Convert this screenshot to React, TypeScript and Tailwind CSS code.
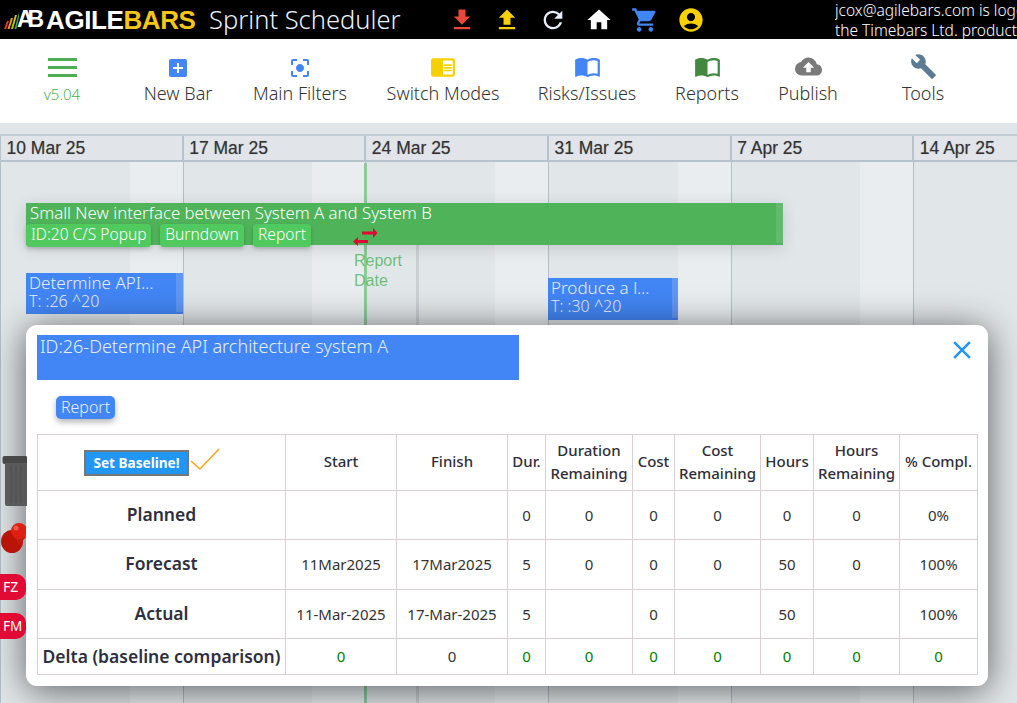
import { MdFileDownload, MdFileUpload, MdRefresh, MdHome, MdShoppingCart, MdAccountCircle, MdAddBox, MdCenterFocusStrong, MdChromeReaderMode, MdImportContacts, MdCloudUpload, MdBuild, MdClose } from 'react-icons/md';

const ui = { fontFamily: '"Noto Sans", sans-serif' };
const arial = { fontFamily: '"Liberation Sans", sans-serif' };

const weeks = ['10 Mar 25', '17 Mar 25', '24 Mar 25', '31 Mar 25', '7 Apr 25', '14 Apr 25'];

const tools = [
  { label: 'New Bar', width: 'w-[108px]', icon: <MdAddBox size={24} className="text-[#4285f4]" /> },
  { label: 'Main Filters', width: 'w-[136px]', icon: <MdCenterFocusStrong size={24} className="text-[#4285f4]" /> },
  { label: 'Switch Modes', width: 'w-[150px]', icon: <MdChromeReaderMode size={26} className="text-[#f7d000]" /> },
  { label: 'Risks/Issues', width: 'w-[138px]', icon: <MdImportContacts size={27} className="text-[#4285f4]" /> },
  { label: 'Reports', width: 'w-[102px]', icon: <MdImportContacts size={27} className="text-[#43883f]" /> },
  { label: 'Publish', width: 'w-[100px]', icon: <MdCloudUpload size={27} className="text-[#7a7a7a]" /> },
  { label: 'Tools', width: 'w-[130px]', icon: <MdBuild size={27} className="text-[#5b7a94]" /> },
];

const rows = [
  { label: 'Planned', h: 'h-[49px]', cells: ['', '', '0', '0', '0', '0', '0', '0', '0%'] },
  { label: 'Forecast', h: 'h-[50px]', cells: ['11Mar2025', '17Mar2025', '5', '0', '0', '0', '50', '0', '100%'] },
  { label: 'Actual', h: 'h-[49px]', cells: ['11-Mar-2025', '17-Mar-2025', '5', '', '0', '', '50', '', '100%'] },
];

const delta = ['0', '0', '0', '0', '0', '0', '0', '0', '0'];

const headers = [
  ['Start'],
  ['Finish'],
  ['Dur.'],
  ['Duration', 'Remaining'],
  ['Cost'],
  ['Cost', 'Remaining'],
  ['Hours'],
  ['Hours', 'Remaining'],
  ['% Compl.'],
];

const colWidths = ['w-[248px]', 'w-[111px]', 'w-[111px]', 'w-[38px]', 'w-[87px]', 'w-[42px]', 'w-[86px]', 'w-[53px]', 'w-[86px]', 'w-[78px]'];

function Logo() {
  return (
    <div className="flex items-center w-[197px] shrink-0 pl-1 h-full">
      <svg width="15" height="18" viewBox="0 0 15 18" className="shrink-0">
        <path d="M0 18 L3 10 L5 10 L2 18Z" fill="#e53935" />
        <path d="M3.5 18 L7 7 L9 7 L5.5 18Z" fill="#f39c12" />
        <path d="M7 18 L11 4 L13 4 L9 18Z" fill="#b9c41f" />
        <path d="M10.5 18 L15 1 L15 6 L12.5 18Z" fill="#43a047" />
      </svg>
      <span className="w-[29px] -ml-[2px] text-white font-bold text-[23px] tracking-[-6px] leading-none" style={arial}>AB</span>
      <span className="font-bold text-[26px] leading-none tracking-[-0.4px] whitespace-nowrap" style={arial}>
        <span className="text-white">AGILE</span>
        <span className="text-[#f5c518]">BARS</span>
      </span>
    </div>
  );
}

function Header() {
  return (
    <div className="h-[39px] bg-black flex items-center relative overflow-hidden">
      <Logo />
      <div className="ml-3 text-[25.5px] font-light text-[#eaf2ff] w-[230px] whitespace-nowrap">Sprint Scheduler</div>
      <div className="flex items-center gap-[18px] ml-[9px]">
        <MdFileDownload size={28} className="text-[#e8483a]" />
        <MdFileUpload size={28} className="text-[#f7d000] -ml-px" />
        <MdRefresh size={28} className="text-[#e6effa]" />
        <MdHome size={28} className="text-white" />
        <MdShoppingCart size={28} className="text-[#4285f4]" />
        <MdAccountCircle size={28} className="text-[#f7d000]" />
      </div>
      <div className="ml-auto w-[182px] shrink-0 text-[15.5px] leading-[20px] font-light text-white whitespace-nowrap overflow-hidden">
        <div>jcox@agilebars.com is logged in</div>
        <div>the Timebars Ltd. product</div>
      </div>
    </div>
  );
}

function Toolbar() {
  return (
    <div className="h-[84px] bg-white flex">
      <div className="w-[124px] flex flex-col items-center pt-[19px]">
        <div className="w-[29px] flex flex-col gap-[5px]">
          <div className="h-[3px] bg-[#4caf50]" />
          <div className="h-[3px] bg-[#4caf50]" />
          <div className="h-[3px] bg-[#4caf50]" />
        </div>
        <div className="text-[15px] font-light text-[#4caf50] mt-[6px]">v5.04</div>
      </div>
      {tools.map((t) => (
        <div key={t.label} className={`${t.width} flex flex-col items-center`}>
          <div className="h-[42px] flex items-end pb-[1px]">{t.icon}</div>
          <div className="text-[18px] font-light text-[#333] leading-[24px] whitespace-nowrap">{t.label}</div>
        </div>
      ))}
    </div>
  );
}

function Timeline() {
  return (
    <div className="relative flex-1 overflow-hidden mt-[11px] bg-[#e1e6e9] border-t-2 border-[#c3cdd3]">
      <div className="flex h-full -ml-px">
        {weeks.map((w) => (
          <div key={w} className="w-[182.67px] shrink-0 flex flex-col">
            <div className="h-[26px] shrink-0 border-l-2 border-b-2 border-[#b7c3ca] bg-[#e1e5e9] pl-[5.5px] text-[17.5px] leading-[25px] text-[#333] [text-shadow:0_0_1px_rgba(0,0,0,0.35)]" style={arial}>
              {w}
            </div>
            <div className="flex-1 ml-px border-l border-[#b3bfc7] flex justify-end">
              <div className="w-[53px] -mr-px bg-[#e9edf0]" />
            </div>
          </div>
        ))}
      </div>

      <div className="absolute left-[416px] top-[67px] bottom-0 w-[3px] bg-[#ccd0d4]" />
      <div className="absolute left-[364px] top-[27px] bottom-0 w-[2.5px] bg-[#8ecb99]" />

      <div className="absolute left-[26px] top-[67px] w-[757px] h-[42px] bg-[#4fb35a] text-white font-light shadow-[0_3px_16px_rgba(0,0,0,0.14)]">
        <div className="pl-1 -mt-px text-[16.8px] leading-[21px] whitespace-nowrap">Small New interface between System A and System B</div>
        <div className="flex gap-[9px] mt-px text-[15.6px] leading-[21px]">
          <div className="h-[23px] w-[125px] pl-[5px] bg-[#50c95f] rounded-[4px] shadow-[0_2px_4px_rgba(0,0,0,0.2)] whitespace-nowrap">ID:20 C/S Popup</div>
          <div className="h-[23px] w-[84px] text-center bg-[#50c95f] rounded-[4px] shadow-[0_2px_4px_rgba(0,0,0,0.2)]">Burndown</div>
          <div className="h-[23px] w-[58px] text-center bg-[#50c95f] rounded-[4px] shadow-[0_2px_4px_rgba(0,0,0,0.2)]">Report</div>
        </div>
        <div className="absolute right-0 top-0 bottom-[2px] w-[7px] bg-white/10" />
      </div>

      <svg className="absolute left-[352px] top-[92px]" width="27" height="20" viewBox="0 0 27 20" fill="#e00a35">
        <path d="M10 3.500 H21 V0 L25.500 5 L21 10 V6.500 H10Z" />
        <path d="M16 12 H6 V9 L1 13.500 L6 18 V15 H16Z" />
      </svg>

      <div className="absolute left-[354px] top-[115px] text-[16px] leading-[20px] text-[#4fb35a]/80" style={arial}>
        Report<br />Date
      </div>

      <div className="absolute left-[26px] top-[137px] w-[157px] h-[41px] bg-[#4285f4] text-[#e6efff] font-light">
        <div className="pl-[3px] text-[17px] leading-[19px] whitespace-nowrap">Determine API…</div>
        <div className="pl-[3px] text-[16px] leading-[19px]">T: :26 ^20</div>
        <div className="absolute right-0 top-0 bottom-[2px] w-[7px] bg-white/15" />
      </div>
      <div className="absolute left-[548px] top-[142px] w-[130px] h-[42px] bg-[#4285f4] text-[#e6efff] font-light">
        <div className="pl-[3px] text-[17px] leading-[19px] whitespace-nowrap">Produce a l…</div>
        <div className="pl-[3px] text-[16px] leading-[19px]">T: :30 ^20</div>
        <div className="absolute right-0 top-0 bottom-[2px] w-[6px] bg-white/15" />
      </div>

      <svg className="absolute z-10 left-[2px] top-[319px]" width="25" height="52" viewBox="0 0 25 52">
        <rect x="0.500" y="1" width="25" height="8" rx="2" fill="#484848" />
        <path d="M3 8 H25 V51 H5 Q3 51 3 49Z" fill="#5a5a5a" />
        <path d="M9 11 V48 M14 11 V48 M19 11 V48" stroke="#505050" strokeWidth="1" />
      </svg>
      <svg className="absolute z-10 left-0 top-[387px]" width="26" height="32" viewBox="0 0 26 32">
        <ellipse cx="12" cy="18.500" rx="11" ry="11.500" fill="#b81408" />
        <path d="M13 12 L20 6 L26 14 L19 22Z" fill="#c81a0a" />
        <circle cx="19" cy="8" r="8" fill="#dd2012" />
        <circle cx="16" cy="5" r="2.500" fill="#ea5a4c" />
      </svg>
      <div className="absolute z-10 left-0 top-[438px] w-[26px] h-[26px] rounded-r-[10px] bg-[#e00a35] text-white text-[14px] leading-[26px] pl-[3px]">FZ</div>
      <div className="absolute z-10 left-0 top-[477px] w-[26px] h-[26px] rounded-r-[10px] bg-[#e00a35] text-white text-[13.5px] leading-[26px] pl-[3px]">FM</div>
    </div>
  );
}

function BaselineModal() {
  return (
    <div className="absolute left-[26px] top-[325px] w-[962px] h-[361px] bg-white rounded-[11px] shadow-[0_4px_36px_rgba(0,0,0,0.6)] pt-[10px] pl-[11px]">
      <div className="w-[482px] h-[45px] bg-[#4285f4] text-[#e6efff] text-[18px] font-light pl-[3px] leading-[23px] whitespace-nowrap">ID:26-Determine API architecture system A</div>
      <MdClose size={30} className="absolute right-[11px] top-[10px] text-[#2196f3]" />
      <div className="ml-[19px] mt-[16px] w-[59px] h-[23px] rounded-[5px] bg-[#4285f4] text-[#e6efff] font-light text-[16px] leading-[23px] text-center shadow-[0_3px_6px_rgba(0,0,0,0.3)]">Report</div>
      <table className="mt-[15px] w-[940px] table-fixed border-collapse text-[#333]">
        <colgroup>
          {colWidths.map((c, i) => (
            <col key={i} className={c} />
          ))}
        </colgroup>
        <thead>
          <tr className="h-[56px]">
            <th className="border border-[#d8d0d4]">
              <div className="flex items-center pl-[46px]">
                <div className="w-[105px] h-[26px] bg-[#2196f3] border-2 border-[#777] text-white text-[13.6px] font-bold leading-[22px]">Set Baseline!</div>
                <svg width="32" height="26" viewBox="0 0 32 26" fill="none" stroke="#f5a623" strokeWidth="1.600" className="-mt-[5px]">
                  <path d="M2 14 L11 22 L30 2" />
                </svg>
              </div>
            </th>
            {headers.map((h) => (
              <th key={h.join()} className="border border-[#d8d0d4] text-[15px] font-medium leading-[23px] text-[#2e2e3a] px-0 pb-[2px]">
                {h.map((l) => (
                  <div key={l} className="whitespace-nowrap">{l}</div>
                ))}
              </th>
            ))}
          </tr>
        </thead>
        <tbody>
          {rows.map((r) => (
            <tr key={r.label} className={r.h}>
              <td className="border border-[#d8d0d4] text-center text-[17.5px] font-semibold text-[#2d3040] pb-[2px]">{r.label}</td>
              {r.cells.map((c, i) => (
                <td key={i} className="border border-[#d8d0d4] text-center text-[15px] whitespace-nowrap">{c}</td>
              ))}
            </tr>
          ))}
          <tr className="h-[36px]">
            <td className="border border-[#d8d0d4] text-center text-[17.5px] font-semibold text-[#2d3040] whitespace-nowrap">Delta (baseline comparison)</td>
            {delta.map((c, i) => (
              <td key={i} className={`border border-[#d8d0d4] text-center text-[15px] ${i === 1 ? 'text-[#333]' : 'text-[#008000]'}`}>{c}</td>
            ))}
          </tr>
        </tbody>
      </table>
    </div>
  );
}

export default function App() {
  return (
    <div className="relative w-[1017px] h-[703px] overflow-hidden flex flex-col bg-[#e0e5e9]" style={ui}>
      <Header />
      <Toolbar />
      <Timeline />
      <BaselineModal />
    </div>
  );
}
